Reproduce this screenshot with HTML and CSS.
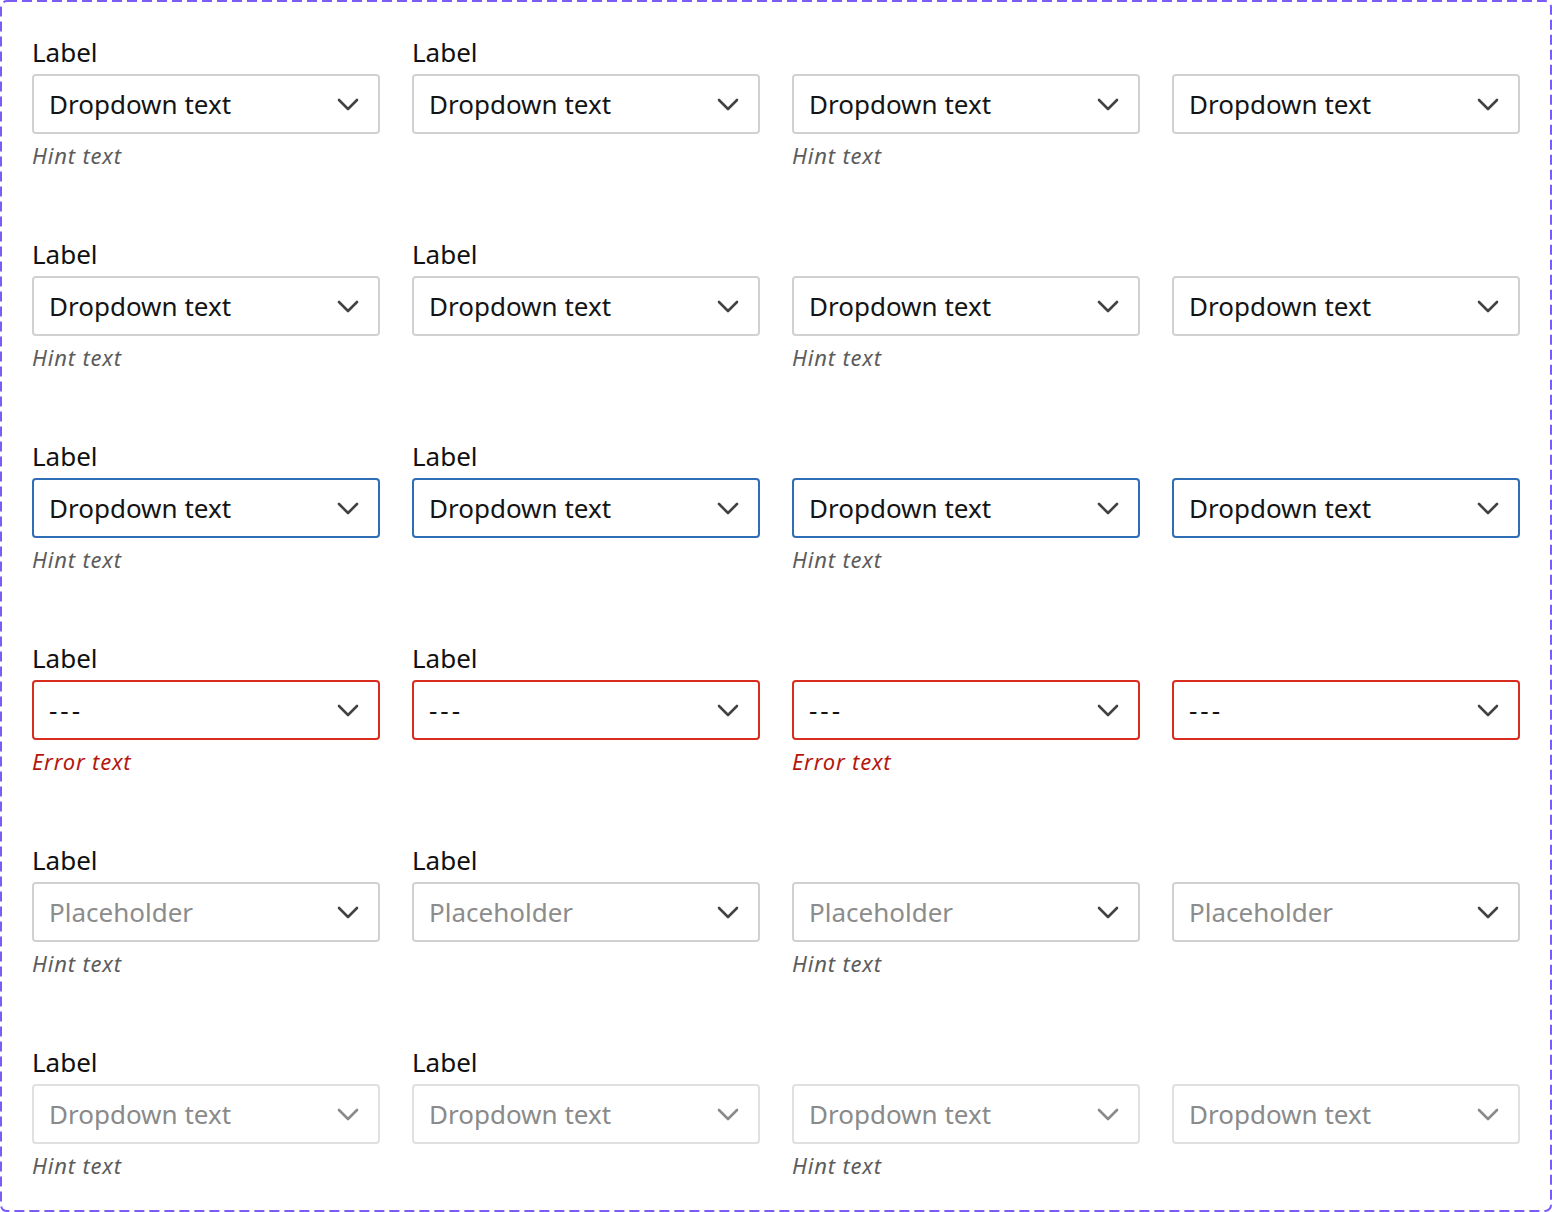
FILE: index.html
```html
<!DOCTYPE html>
<html>
<head>
<meta charset="utf-8">
<link rel="stylesheet" href="styles.css">
</head>
<body>
<div class="frame">
  <svg class="frame-border" width="100%" height="100%" aria-hidden="true"><rect x="1" y="1" rx="6" ry="6" width="1550" height="1210"/></svg>
  <div class="grid">
    <!-- row 1: rest -->
    <div class="field"><div class="label">Label</div><div class="dd"><span class="val">Dropdown text</span><svg class="chev" viewBox="0 0 22 13"><path d="M2 2 L11 11 L20 2"/></svg></div><div class="hint">Hint text</div></div>
    <div class="field"><div class="label">Label</div><div class="dd"><span class="val">Dropdown text</span><svg class="chev" viewBox="0 0 22 13"><path d="M2 2 L11 11 L20 2"/></svg></div></div>
    <div class="field"><div class="label"></div><div class="dd"><span class="val">Dropdown text</span><svg class="chev" viewBox="0 0 22 13"><path d="M2 2 L11 11 L20 2"/></svg></div><div class="hint">Hint text</div></div>
    <div class="field"><div class="label"></div><div class="dd"><span class="val">Dropdown text</span><svg class="chev" viewBox="0 0 22 13"><path d="M2 2 L11 11 L20 2"/></svg></div></div>
    <!-- row 2: hover -->
    <div class="field"><div class="label">Label</div><div class="dd hover"><span class="val">Dropdown text</span><svg class="chev" viewBox="0 0 22 13"><path d="M2 2 L11 11 L20 2"/></svg></div><div class="hint">Hint text</div></div>
    <div class="field"><div class="label">Label</div><div class="dd hover"><span class="val">Dropdown text</span><svg class="chev" viewBox="0 0 22 13"><path d="M2 2 L11 11 L20 2"/></svg></div></div>
    <div class="field"><div class="label"></div><div class="dd hover"><span class="val">Dropdown text</span><svg class="chev" viewBox="0 0 22 13"><path d="M2 2 L11 11 L20 2"/></svg></div><div class="hint">Hint text</div></div>
    <div class="field"><div class="label"></div><div class="dd hover"><span class="val">Dropdown text</span><svg class="chev" viewBox="0 0 22 13"><path d="M2 2 L11 11 L20 2"/></svg></div></div>
    <!-- row 3: focus -->
    <div class="field"><div class="label">Label</div><div class="dd focus"><span class="val">Dropdown text</span><svg class="chev" viewBox="0 0 22 13"><path d="M2 2 L11 11 L20 2"/></svg></div><div class="hint">Hint text</div></div>
    <div class="field"><div class="label">Label</div><div class="dd focus"><span class="val">Dropdown text</span><svg class="chev" viewBox="0 0 22 13"><path d="M2 2 L11 11 L20 2"/></svg></div></div>
    <div class="field"><div class="label"></div><div class="dd focus"><span class="val">Dropdown text</span><svg class="chev" viewBox="0 0 22 13"><path d="M2 2 L11 11 L20 2"/></svg></div><div class="hint">Hint text</div></div>
    <div class="field"><div class="label"></div><div class="dd focus"><span class="val">Dropdown text</span><svg class="chev" viewBox="0 0 22 13"><path d="M2 2 L11 11 L20 2"/></svg></div></div>
    <!-- row 4: error -->
    <div class="field"><div class="label">Label</div><div class="dd error"><span class="val dashes">---</span><svg class="chev" viewBox="0 0 22 13"><path d="M2 2 L11 11 L20 2"/></svg></div><div class="hint err">Error text</div></div>
    <div class="field"><div class="label">Label</div><div class="dd error"><span class="val dashes">---</span><svg class="chev" viewBox="0 0 22 13"><path d="M2 2 L11 11 L20 2"/></svg></div></div>
    <div class="field"><div class="label"></div><div class="dd error"><span class="val dashes">---</span><svg class="chev" viewBox="0 0 22 13"><path d="M2 2 L11 11 L20 2"/></svg></div><div class="hint err">Error text</div></div>
    <div class="field"><div class="label"></div><div class="dd error"><span class="val dashes">---</span><svg class="chev" viewBox="0 0 22 13"><path d="M2 2 L11 11 L20 2"/></svg></div></div>
    <!-- row 5: placeholder -->
    <div class="field"><div class="label">Label</div><div class="dd placeholder"><span class="val">Placeholder</span><svg class="chev" viewBox="0 0 22 13"><path d="M2 2 L11 11 L20 2"/></svg></div><div class="hint">Hint text</div></div>
    <div class="field"><div class="label">Label</div><div class="dd placeholder"><span class="val">Placeholder</span><svg class="chev" viewBox="0 0 22 13"><path d="M2 2 L11 11 L20 2"/></svg></div></div>
    <div class="field"><div class="label"></div><div class="dd placeholder"><span class="val">Placeholder</span><svg class="chev" viewBox="0 0 22 13"><path d="M2 2 L11 11 L20 2"/></svg></div><div class="hint">Hint text</div></div>
    <div class="field"><div class="label"></div><div class="dd placeholder"><span class="val">Placeholder</span><svg class="chev" viewBox="0 0 22 13"><path d="M2 2 L11 11 L20 2"/></svg></div></div>
    <!-- row 6: disabled -->
    <div class="field"><div class="label">Label</div><div class="dd disabled"><span class="val">Dropdown text</span><svg class="chev" viewBox="0 0 22 13"><path d="M2 2 L11 11 L20 2"/></svg></div><div class="hint">Hint text</div></div>
    <div class="field"><div class="label">Label</div><div class="dd disabled"><span class="val">Dropdown text</span><svg class="chev" viewBox="0 0 22 13"><path d="M2 2 L11 11 L20 2"/></svg></div></div>
    <div class="field"><div class="label"></div><div class="dd disabled"><span class="val">Dropdown text</span><svg class="chev" viewBox="0 0 22 13"><path d="M2 2 L11 11 L20 2"/></svg></div><div class="hint">Hint text</div></div>
    <div class="field"><div class="label"></div><div class="dd disabled"><span class="val">Dropdown text</span><svg class="chev" viewBox="0 0 22 13"><path d="M2 2 L11 11 L20 2"/></svg></div></div>
  </div>
</div>
</body>
</html>
```

FILE: styles.css
```css
* { box-sizing: border-box; }
html, body { margin: 0; padding: 0; background: #ffffff; }
body { font-family: "Noto Sans", "Open Sans", sans-serif; color: #111111; }

.frame {
  position: relative;
  width: 1552px;
  height: 1212px;
  padding: 34px 32px 0 32px;
}
.frame-border {
  position: absolute;
  left: 0; top: 0;
  width: 1552px; height: 1212px;
  pointer-events: none;
}
.frame-border rect {
  fill: none;
  stroke: #7b5cf6;
  stroke-width: 2;
  stroke-dasharray: 10 5;
}

.grid {
  display: grid;
  grid-template-columns: repeat(4, 348px);
  column-gap: 32px;
  grid-auto-rows: 202px;
}

.field { display: flex; flex-direction: column; }

.label {
  height: 36px;
  font-size: 26px;
  line-height: 36px;
  color: #111;
  margin-bottom: 4px;
}

.dd {
  height: 60px;
  border: 2px solid #d1d1d1;
  border-radius: 4px;
  display: flex;
  align-items: center;
  justify-content: space-between;
  padding: 0 19px 0 15px;
  font-size: 26px;
  color: #141414;
}
.dd .val { line-height: 30px; }
.dd .dashes { letter-spacing: 3px; }
.chev { width: 22px; height: 13px; flex: none; }
.chev path { fill: none; stroke: #424242; stroke-width: 2.6; stroke-linecap: round; stroke-linejoin: round; }

.dd.focus { border-color: #2f6db6; }
.dd.error { border-color: #d72c1e; }
.dd.placeholder .val { color: #8c8c8c; }
.dd.disabled { border-color: #e0e0e0; }
.dd.disabled .val { color: #8a8a8a; }
.dd.disabled .chev path { stroke: #8a8a8a; }

.hint {
  margin-top: 6px;
  font-size: 22px;
  line-height: 30px;
  letter-spacing: 0.8px;
  font-style: italic;
  color: #5c5c5c;
}
.hint.err { color: #b5170e; }
```
